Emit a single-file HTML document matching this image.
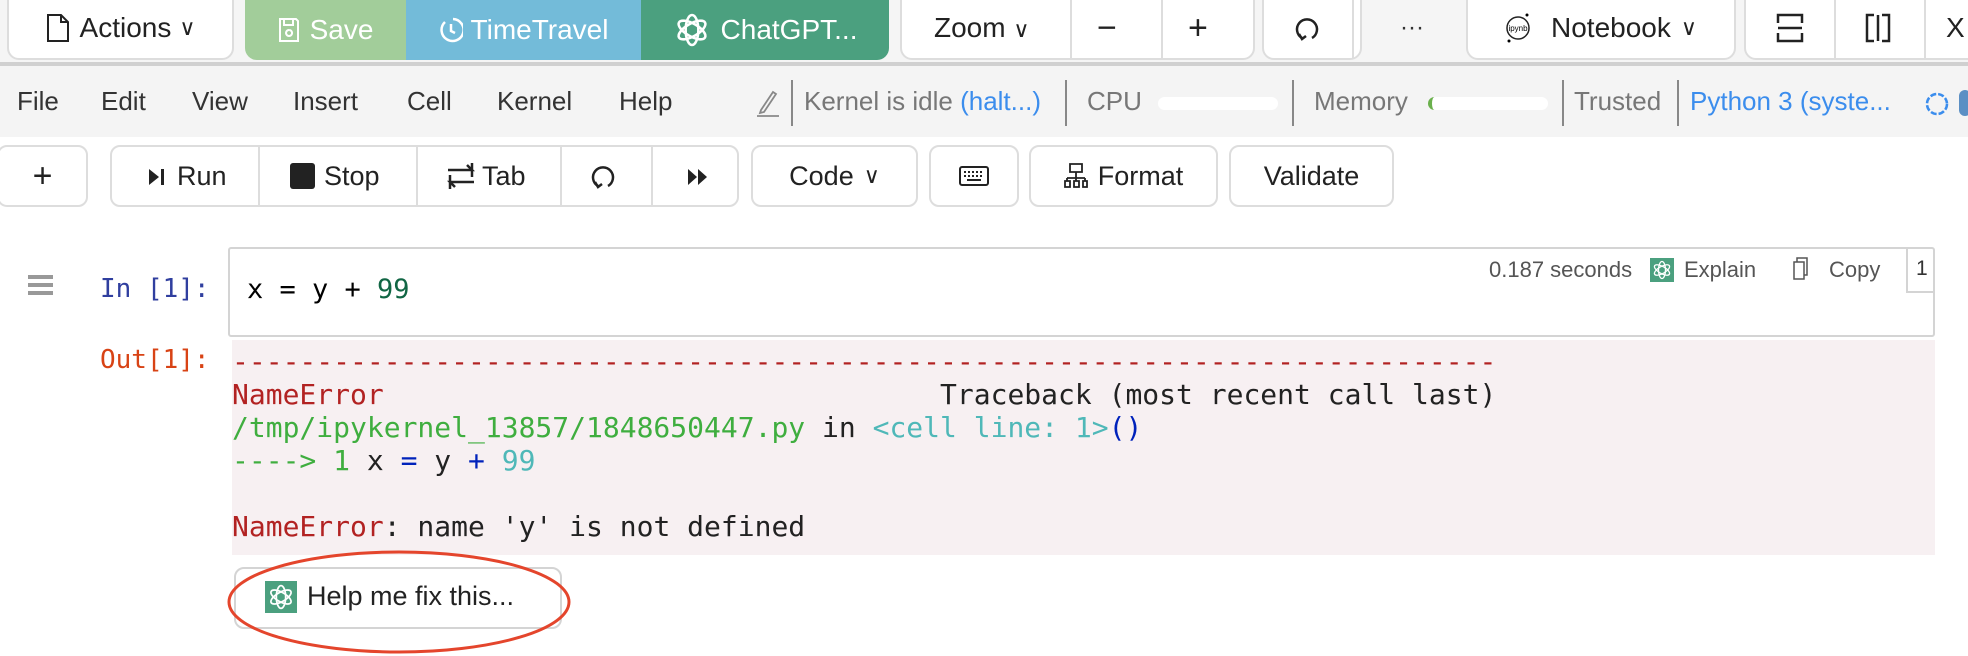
<!DOCTYPE html>
<html><head><meta charset="utf-8"><style>
*{box-sizing:border-box;margin:0;padding:0}
body{width:1968px;height:656px;overflow:hidden;background:#fff;font-family:"Liberation Sans",sans-serif;position:relative;color:#222}
.a{position:absolute}
.btn{position:absolute;background:#fff;border:2px solid #ddd;display:flex;align-items:center;justify-content:center;font-size:28px;color:#222}
.top{top:-4px;height:64px;border-radius:0 0 12px 12px}
.tb{top:145px;height:62px;border-radius:10px;font-size:27px}
.div{position:absolute;top:0;bottom:0;width:2px;background:#ddd}
.menu{position:absolute;top:86px;font-size:26px;color:#333}
.st{position:absolute;top:86px;font-size:26px;color:#777}
.vd{position:absolute;top:80px;height:46px;width:2px;background:#888}
.mono{font-family:"DejaVu Sans Mono","Liberation Mono",monospace;font-size:28px;white-space:pre;position:absolute}
</style></head><body>
<div class="a" style="left:0;top:0;width:1968px;height:63px;background:#f5f5f5"></div>
<div class="a" style="left:0;top:62px;width:1968px;height:4px;background:#d0d0d0"></div>
<div class="btn top" style="left:7px;width:227px">
<svg width="24" height="30" viewBox="0 0 24 30" style="margin-right:10px"><path d="M2 2h13l7 7v19H2z M15 2v7h7" fill="none" stroke="#222" stroke-width="2"/></svg>Actions <span style="margin-left:8px;font-size:22px">∨</span></div>
<div class="a" style="left:245px;top:0;width:161px;height:60px;background:#a2cd9a;border-radius:0 0 0 12px;color:#fff;font-size:28px;display:flex;align-items:center;justify-content:center">
<svg width="22" height="26" viewBox="0 0 22 26" style="margin-right:10px"><path d="M2 2h16l2 2v20H2z M6 2v6h9V2 M11 13a3 3 0 1 0 .1 0" fill="none" stroke="#fff" stroke-width="2"/></svg>Save</div>
<div class="a" style="left:406px;top:0;width:235px;height:60px;background:#73bbd9;color:#fff;font-size:28px;display:flex;align-items:center;justify-content:center">
<svg width="24" height="28" viewBox="0 0 24 28" style="margin-right:8px"><path d="M14 3a11 11 0 1 1-8 3 M12 8v7l4 2" fill="none" stroke="#fff" stroke-width="2.5"/></svg>TimeTravel</div>
<div class="a" style="left:641px;top:0;width:248px;height:60px;background:#4ba07f;border-radius:0 0 12px 0;color:#fff;font-size:28px;display:flex;align-items:center;justify-content:center">
<svg width="38" height="38" viewBox="0 0 24 24" style="margin-right:10px"><g fill="none" stroke="#fff" stroke-width="1.6"><ellipse cx="12" cy="12" rx="4" ry="9.5"/><ellipse cx="12" cy="12" rx="4" ry="9.5" transform="rotate(60 12 12)"/><ellipse cx="12" cy="12" rx="4" ry="9.5" transform="rotate(120 12 12)"/></g></svg>ChatGPT...</div>
<div class="btn top" style="left:900px;width:355px;justify-content:flex-start">
<span style="position:absolute;left:32px">Zoom <span style="font-size:22px">∨</span></span>
<div class="div" style="left:168px"></div><span style="position:absolute;left:195px;font-size:34px">−</span>
<div class="div" style="left:259px"></div><span style="position:absolute;left:286px;font-size:34px">+</span></div>
<div class="btn top" style="left:1262px;width:100px;justify-content:flex-start">
<svg width="26" height="28" viewBox="0 0 26 28" style="position:absolute;left:30px"><path d="M8 24A10 10 0 1 1 18 24" fill="none" stroke="#222" stroke-width="2.5"/><path d="M5 20l3 5 4-3" fill="none" stroke="#222" stroke-width="2.5"/></svg>
<div class="div" style="left:88px"></div></div>
<div class="a" style="left:1400px;top:14px;font-size:24px;color:#333">···</div>
<div class="btn top" style="left:1466px;width:270px">
<svg width="26" height="34" viewBox="0 0 26 34" style="margin-right:20px"><circle cx="13" cy="17" r="11" fill="none" stroke="#222" stroke-width="1.5"/><text x="13" y="20" font-size="8" text-anchor="middle" font-family="Liberation Sans">ipynb</text><circle cx="22" cy="4" r="1.5"/><circle cx="4" cy="30" r="1.5"/></svg>Notebook <span style="margin-left:10px;font-size:22px">∨</span></div>
<div class="btn top" style="left:1744px;width:240px;justify-content:flex-start">
<svg width="28" height="30" viewBox="0 0 28 30" style="position:absolute;left:30px"><path d="M2 10V2h24v8 M2 20v8h24v-8 M2 15h24" fill="none" stroke="#222" stroke-width="2.5"/></svg>
<div class="div" style="left:88px"></div>
<svg width="28" height="30" viewBox="0 0 28 30" style="position:absolute;left:118px"><path d="M10 2H3v26h7 M18 2h7v26h-7 M14 2v26" fill="none" stroke="#222" stroke-width="2.5"/></svg>
<div class="div" style="left:178px"></div><span style="position:absolute;left:200px;font-size:28px">X</span></div>
<div class="a" style="left:0;top:66px;width:1968px;height:71px;background:#f4f4f4"></div>
<div class="menu" style="left:17px">File</div><div class="menu" style="left:101px">Edit</div><div class="menu" style="left:192px">View</div><div class="menu" style="left:293px">Insert</div><div class="menu" style="left:407px">Cell</div><div class="menu" style="left:497px">Kernel</div><div class="menu" style="left:619px">Help</div>
<svg class="a" style="left:755px;top:88px" width="26" height="30" viewBox="0 0 26 30"><path d="M6 22L18 4l3 2L9 24l-4 1z M2 28h22" fill="none" stroke="#888" stroke-width="1.8"/></svg>
<div class="vd" style="left:791px"></div>
<div class="st" style="left:804px">Kernel is idle <span style="color:#3b8ded">(halt...)</span></div>
<div class="vd" style="left:1065px"></div>
<div class="st" style="left:1087px">CPU</div>
<div class="a" style="left:1158px;top:97px;width:120px;height:13px;background:#fff;border-radius:7px"></div>
<div class="vd" style="left:1292px"></div>
<div class="st" style="left:1314px">Memory</div>
<div class="a" style="left:1428px;top:97px;width:120px;height:13px;background:#fff;border-radius:7px;border-left:4px solid #6ab04c"></div>
<div class="vd" style="left:1562px"></div>
<div class="st" style="left:1574px">Trusted</div>
<div class="vd" style="left:1677px"></div>
<div class="st" style="left:1690px;color:#3b8ded">Python 3 (syste...</div>
<svg class="a" style="left:1925px;top:92px" width="24" height="24" viewBox="0 0 24 24"><circle cx="12" cy="12" r="10" fill="none" stroke="#3b8ded" stroke-width="2.5" stroke-dasharray="6 2"/></svg>
<div class="a" style="left:1959px;top:90px;width:12px;height:26px;background:#5b8fc4;border-radius:6px"></div>
<div class="btn tb" style="left:-3px;width:91px;font-size:34px">+</div>
<div class="btn tb" style="left:110px;width:629px;justify-content:flex-start">
<svg class="a" style="left:36px;top:20px" width="20" height="20"><path d="M1 2l10 8-10 8z" fill="#222"/><rect x="13" y="2" width="3" height="16" fill="#222"/></svg>
<span style="position:absolute;left:65px">Run</span>
<div class="div" style="left:146px"></div>
<div class="a" style="left:178px;top:16px;width:25px;height:26px;background:#222;border-radius:3px"></div><span style="position:absolute;left:212px">Stop</span>
<div class="div" style="left:304px"></div>
<svg class="a" style="left:334px;top:14px" width="30" height="30" viewBox="0 0 30 30"><path d="M2 9h24l-5-5 M28 21H4l5 5 M26 2v14 M4 14v14" fill="none" stroke="#222" stroke-width="2.5"/></svg><span style="position:absolute;left:370px">Tab</span>
<div class="div" style="left:448px"></div>
<svg class="a" style="left:478px;top:15px" width="26" height="28" viewBox="0 0 26 28"><path d="M8 24A10 10 0 1 1 18 24" fill="none" stroke="#222" stroke-width="2.5"/><path d="M5 20l3 5 4-3" fill="none" stroke="#222" stroke-width="2.5"/></svg>
<div class="div" style="left:539px"></div>
<svg class="a" style="left:575px;top:21px" width="22" height="18"><path d="M1 1l9 8-9 8z M11 1l9 8-9 8z" fill="#222"/></svg></div>
<div class="btn tb" style="left:751px;width:167px">Code <span style="margin-left:10px;font-size:22px">∨</span></div>
<div class="btn tb" style="left:929px;width:90px"><svg width="30" height="20" viewBox="0 0 30 20"><rect x="1" y="1" width="28" height="18" rx="2" fill="none" stroke="#222" stroke-width="2"/><path d="M5 6h20M5 10h20" stroke="#222" stroke-width="2" stroke-dasharray="2 2"/><path d="M8 14h14" stroke="#222" stroke-width="2"/></svg></div>
<div class="btn tb" style="left:1029px;width:189px"><svg width="24" height="26" viewBox="0 0 24 26" style="margin-right:10px"><path d="M6 1h12v8H6z M12 9v6 M3 15h18 M3 15v3 M12 15v3 M21 15v3 M1 18h5v6H1z M10 18h5v6h-5z M19 18h4v6h-4z" fill="none" stroke="#222" stroke-width="1.8"/></svg>Format</div>
<div class="btn tb" style="left:1229px;width:165px">Validate</div>
<div class="a" style="left:28px;top:275px;width:25px;height:4px;background:#999"></div>
<div class="a" style="left:28px;top:283px;width:25px;height:4px;background:#999"></div>
<div class="a" style="left:28px;top:291px;width:25px;height:4px;background:#999"></div>
<div class="mono" style="left:100px;top:274px;color:#303f9f;font-size:26px">In [1]:</div>
<div class="a" style="left:228px;top:247px;width:1707px;height:90px;border:2px solid #d4d4d4;border-radius:3px"></div>
<div class="mono" style="left:247px;top:274px;font-size:27px;color:#000">x = y + <span style="color:#116644">99</span></div>
<div class="a" style="left:1489px;top:257px;font-size:22px;color:#555">0.187 seconds</div>
<svg class="a" style="left:1650px;top:258px" width="24" height="24" viewBox="0 0 24 24"><rect width="24" height="24" fill="#4ba07f"/><g fill="none" stroke="#fff" stroke-width="1.3"><ellipse cx="12" cy="12" rx="3.5" ry="8.5"/><ellipse cx="12" cy="12" rx="3.5" ry="8.5" transform="rotate(60 12 12)"/><ellipse cx="12" cy="12" rx="3.5" ry="8.5" transform="rotate(120 12 12)"/></g></svg>
<div class="a" style="left:1684px;top:257px;font-size:22px;color:#555">Explain</div>
<svg class="a" style="left:1793px;top:257px" width="16" height="24" viewBox="0 0 16 24"><path d="M1 5h10v17H1z M4 5V1h10v17h-3" fill="none" stroke="#555" stroke-width="1.5"/></svg>
<div class="a" style="left:1829px;top:257px;font-size:22px;color:#555">Copy</div>
<div class="a" style="left:1906px;top:247px;width:29px;height:46px;border-left:2px solid #d4d4d4;border-bottom:2px solid #d4d4d4;font-size:21px;color:#333;padding:10px 0 0 8px">1</div>
<div class="mono" style="left:100px;top:345px;color:#d84315;font-size:26px">Out[1]:</div>
<div class="a" style="left:232px;top:340px;width:1703px;height:215px;background:#f7f0f2"></div>
<div class="mono" style="left:232px;top:345px;line-height:33px;color:#222"><span style="color:#b22222">---------------------------------------------------------------------------</span>
<span style="color:#b22222">NameError</span>                                 Traceback (most recent call last)
<span style="color:#3fae3f">/tmp/ipykernel_13857/1848650447.py</span> in <span style="color:#4fb8b8">&lt;cell line: 1&gt;</span><span style="color:#0022bb">()</span>
<span style="color:#3fae3f">----&gt; 1</span> x <span style="color:#0022bb">=</span> y <span style="color:#0022bb">+</span> <span style="color:#4fb8b8">99</span>

<span style="color:#b22222">NameError</span>: name 'y' is not defined</div>
<div class="a" style="left:234px;top:567px;width:328px;height:62px;border:2px solid #d4d4d4;border-radius:10px"></div>
<svg class="a" style="left:265px;top:581px" width="32" height="32" viewBox="0 0 24 24"><rect width="24" height="24" fill="#4ba07f"/><g fill="none" stroke="#fff" stroke-width="1.3"><ellipse cx="12" cy="12" rx="3.5" ry="8.5"/><ellipse cx="12" cy="12" rx="3.5" ry="8.5" transform="rotate(60 12 12)"/><ellipse cx="12" cy="12" rx="3.5" ry="8.5" transform="rotate(120 12 12)"/></g></svg>
<div class="a" style="left:307px;top:581px;font-size:27px;color:#222">Help me fix this...</div>
<svg class="a" style="left:225px;top:548px" width="350" height="108"><ellipse cx="174" cy="54" rx="170" ry="50" fill="none" stroke="#e4452c" stroke-width="3"/></svg>
</body></html>
